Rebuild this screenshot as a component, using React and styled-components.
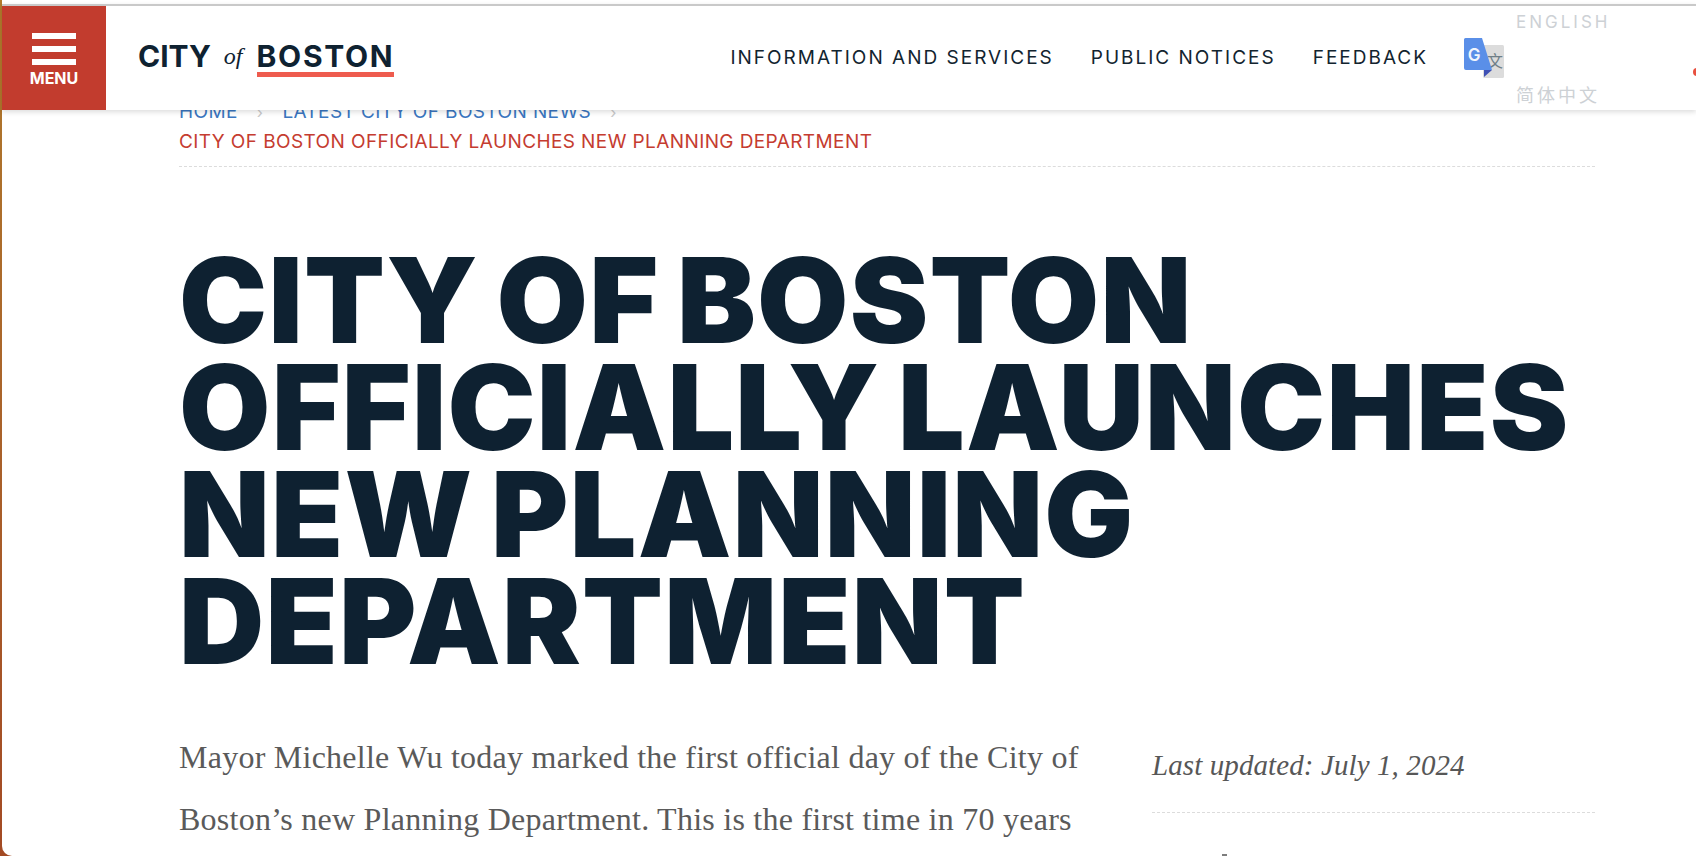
import styled, { createGlobalStyle } from "styled-components";

const GlobalStyle = createGlobalStyle`
  html, body {
    margin: 0;
    padding: 0;
    height: 856px;
    overflow: hidden;
    background: #ffffff;
  }
`;

const Frame = styled.div`
  position: relative;
  width: 1696px;
  height: 856px;
  overflow: hidden;
  background: linear-gradient(180deg, #b07a2c 0%, #a9602a 55%, #a34a24 100%);
`;

const Page = styled.main`
  height: 856px;
  margin-left: 2px;
  padding: 97px 101px 0 177px;
  box-sizing: border-box;
  background: #ffffff;
  border-bottom-left-radius: 10px;
  overflow: hidden;
`;

const Header = styled.header`
  position: absolute;
  top: 4px;
  left: 2px;
  right: 0;
  height: 104px;
  display: flex;
  align-items: stretch;
  background: #ffffff;
  border-top: 2px solid #c9c9c9;
  box-shadow: 0 2px 5px rgba(0, 0, 0, 0.14);
`;

const MenuButton = styled.button`
  width: 104px;
  flex: none;
  border: 0;
  padding: 27px 0 0;
  background: #c23c2e;
  color: #ffffff;
  display: flex;
  flex-direction: column;
  align-items: center;
  font-family: Inter, sans-serif;
  font-weight: 700;
  font-size: 16px;
  line-height: 12px;
`;

const Bar = styled.span`
  display: block;
  width: 44px;
  height: 6px;
  margin-bottom: 7px;
  background: #ffffff;
`;

const Logo = styled.div`
  margin-left: 32px;
  padding-top: 34px;
  display: flex;
  align-items: flex-start;
  color: #0f2231;
  font-family: Inter, sans-serif;
  font-weight: 700;
  font-size: 30px;
  line-height: 32px;
`;

const LogoOf = styled.span`
  font-family: "Liberation Serif", serif;
  font-style: italic;
  font-weight: 400;
  font-size: 24px;
  margin: 0 14px 0 13px;
`;

const LogoBoston = styled.span`
  border-bottom: 5px solid #ee5b4e;
  letter-spacing: 1.7px;
`;

const Nav = styled.nav`
  margin-left: auto;
  padding-bottom: 2px;
  display: flex;
  align-items: center;
  gap: 37px;
  margin-right: 36px;
`;

const NavLink = styled.a`
  color: #12242f;
  font-family: Inter, sans-serif;
  font-size: 19px;
  font-weight: 400;
  letter-spacing: 2px;
  white-space: nowrap;
`;

const TranslateIcon = styled.svg`
  width: 40px;
  height: 40px;
  flex: none;
  align-self: center;
  margin-right: 12px;
`;

const Languages = styled.div`
  width: 180px;
  flex: none;
  padding: 5px 0 3px;
  display: flex;
  flex-direction: column;
  justify-content: space-between;
  color: #cdd1d5;
  font-family: Inter, "Noto Sans CJK SC", sans-serif;
  letter-spacing: 3px;
  line-height: 22px;
`;

const LangLink = styled.span`
  font-size: ${(p) => (p.$cjk ? "18px" : "17px")};
`;

const EdgeDot = styled.span`
  position: absolute;
  right: -5px;
  top: 62px;
  width: 8px;
  height: 8px;
  border-radius: 50%;
  background: #e8503f;
`;

const Crumbs = styled.nav`
  padding-bottom: 9px;
  border-bottom: 1px dashed #dcdcdc;
  font-family: Inter, sans-serif;
  font-size: 19px;
  letter-spacing: 0.4px;
  line-height: 30px;
`;

const CrumbRow = styled.div`
  display: flex;
  align-items: center;
  gap: 19px;
`;

const Crumb = styled.a`
  color: ${(p) => (p.$current ? "#c53c30" : "#3a76c0")};
  white-space: nowrap;
`;

const Chevron = styled.span`
  color: #c9c9c9;
  font-size: 16px;
`;

const Title = styled.h1`
  margin: 80px 0 0;
  color: #0e2131;
  font-family: Inter, sans-serif;
  font-weight: 900;
  font-size: 118px;
  line-height: 107px;
  letter-spacing: 1.2px;
  word-spacing: -7px;
  text-transform: uppercase;
`;

const Columns = styled.div`
  margin-top: 51px;
  display: grid;
  grid-template-columns: 905px 443px;
  column-gap: 68px;
`;

const Body = styled.p`
  margin: 0;
  color: #5a5a5a;
  font-family: "Liberation Serif", serif;
  font-size: 32px;
  letter-spacing: 0.25px;
  line-height: 62px;
`;

const Aside = styled.aside`
  padding-top: 21px;
`;

const Updated = styled.div`
  padding-bottom: 29px;
  border-bottom: 1px dashed #dcdcdc;
  color: #575757;
  font-family: "Liberation Serif", serif;
  font-style: italic;
  font-size: 29px;
  letter-spacing: 0.1px;
  line-height: 36px;
`;

// top of the next sidebar block, only a sliver of it is on screen
const NextBlock = styled.div`
  width: 5px;
  height: 2px;
  margin: 41px 0 0 70px;
  background: #7d7d7d;
`;

function GoogleTranslate() {
  return (
    <TranslateIcon viewBox="0 0 40 40">
      <rect x="19" y="7" width="21" height="33" rx="1.5" fill="#dcdcdc" />
      <text x="31" y="29" fontSize="16" fill="#6f7f88" textAnchor="middle" fontFamily="'Noto Sans CJK SC', sans-serif">文</text>
      <path d="M1.5 0H18L28 32H2a2 2 0 0 1-2-2V1.5A1.5 1.5 0 0 1 1.5 0Z" fill="#5a8fe8" />
      <path d="M20 32h8l-8 7Z" fill="#3f51b5" />
      <text x="10" y="23" fontSize="17" fontWeight="600" fill="#f2f6fd" textAnchor="middle" fontFamily="Inter, sans-serif">G</text>
    </TranslateIcon>
  );
}

export default function App() {
  return (
    <Frame>
      <GlobalStyle />
      <Page>
        <Crumbs>
          <CrumbRow>
            <Crumb>HOME</Crumb>
            <Chevron>›</Chevron>
            <Crumb>LATEST CITY OF BOSTON NEWS</Crumb>
            <Chevron>›</Chevron>
          </CrumbRow>
          <Crumb $current>CITY OF BOSTON OFFICIALLY LAUNCHES NEW PLANNING DEPARTMENT</Crumb>
        </Crumbs>
        <Title>
          City of Boston
          <br />
          Officially Launches
          <br />
          New Planning
          <br />
          Department
        </Title>
        <Columns>
          <Body>
            Mayor Michelle Wu today marked the first official day of the City of Boston’s new Planning Department. This is the first time in 70 years
          </Body>
          <Aside>
            <Updated>Last updated: July 1, 2024</Updated>
            <NextBlock />
          </Aside>
        </Columns>
      </Page>
      <Header>
        <MenuButton aria-label="Menu">
          <Bar />
          <Bar />
          <Bar />
          MENU
        </MenuButton>
        <Logo>
          CITY
          <LogoOf>of</LogoOf>
          <LogoBoston>BOSTON</LogoBoston>
        </Logo>
        <Nav>
          <NavLink>INFORMATION AND SERVICES</NavLink>
          <NavLink>PUBLIC NOTICES</NavLink>
          <NavLink>FEEDBACK</NavLink>
        </Nav>
        <GoogleTranslate />
        <Languages>
          <LangLink>ENGLISH</LangLink>
          <LangLink $cjk>简体中文</LangLink>
        </Languages>
        <EdgeDot />
      </Header>
    </Frame>
  );
}
